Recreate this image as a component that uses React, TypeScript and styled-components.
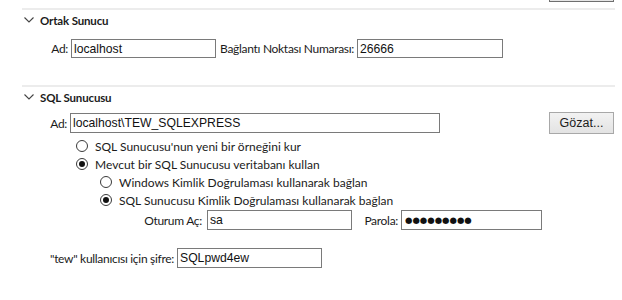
import React from "react";
import styled, { createGlobalStyle } from "styled-components";

const Global = createGlobalStyle`
  html, body { margin: 0; padding: 0; background: #ffffff; }
  body { font-family: Lato, "Open Sans", sans-serif; color: #1b1b1b; }
`;

const Page = styled.div`
  width: 622px;
  height: 300px;
  overflow: hidden;
  display: flex;
  flex-direction: column;
`;

const TopBar = styled.div`
  height: 2px;
  display: flex;
  justify-content: flex-end;
  padding-right: 8px;
`;

const ButtonStub = styled.div`
  width: 63px;
  height: 1px;
  border: 1px solid #6f6f6f;
  border-top: none;
  background: #e5e5e5;
`;

const Divider = styled.div<{ $top: number }>`
  margin-top: ${(p) => p.$top}px;
  margin-left: 22px;
  width: 593px;
  height: 2px;
  background: #ececec;
`;

const Header = styled.div`
  height: 20px;
  display: flex;
  align-items: center;
  padding-left: 24px;
  gap: 6px;
  font-size: 11.5px;
  letter-spacing: -0.15px;
  font-weight: 700;
  color: #1b1b1b;
`;

const Row = styled.div<{ $top: number; $indent: number; $h?: number }>`
  margin-top: ${(p) => p.$top}px;
  padding-left: ${(p) => p.$indent}px;
  height: ${(p) => p.$h ?? 20}px;
  display: flex;
  align-items: center;
`;

const Label = styled.span<{ $gap?: number; $w?: number }>`
  font-size: 12px;
  margin-right: ${(p) => p.$gap ?? 3}px;
  white-space: nowrap;
  ${(p) =>
    p.$w
      ? `width: ${p.$w}px; flex: none; display: flex; justify-content: flex-end; letter-spacing: -0.3px;`
      : ""}
`;

const Field = styled.input<{ $w: number; $h?: number }>`
  box-sizing: border-box;
  width: ${(p) => p.$w}px;
  height: ${(p) => p.$h ?? 20}px;
  border: 1px solid #7a7a7a;
  background: #ffffff;
  padding: 0 2px;
  margin: 0;
  font-family: "Liberation Sans", Arial, sans-serif;
  font-size: 12.2px;
  color: #111111;
  outline: none;
`;

const Dots = styled(Field)`
  font-family: "DejaVu Sans", sans-serif;
  font-size: 8.5px;
  letter-spacing: 0px;
  padding-left: 3px;
`;

const Spacer = styled.div<{ $w: number }>`
  width: ${(p) => p.$w}px;
  flex: none;
`;

const Button = styled.button`
  box-sizing: border-box;
  width: 65px;
  height: 22px;
  margin-left: auto;
  margin-right: 8px;
  border: 1px solid #a8a8a8;
  border-radius: 0;
  background: linear-gradient(#f2f2f2, #e3e3e3);
  font-family: "Liberation Sans", Arial, sans-serif;
  font-size: 12.5px;
  color: #1b1b1b;
  padding: 0;
`;

const RadioCircle = styled.span<{ $checked?: boolean }>`
  box-sizing: border-box;
  width: 12px;
  height: 12px;
  border-radius: 50%;
  border: 1px solid #3a3a3a;
  background: #ffffff;
  display: inline-flex;
  align-items: center;
  justify-content: center;
  margin-right: 7px;
  flex: none;
  &::after {
    content: "";
    width: 6px;
    height: 6px;
    border-radius: 50%;
    background: ${(p) => (p.$checked ? "#111111" : "transparent")};
  }
`;

const Chevron = () => (
  <svg width="10" height="6" viewBox="0 0 10 6">
    <polyline points="0.5,0.5 5,5 9.5,0.5" fill="none" stroke="#444" strokeWidth="1.1" />
  </svg>
);

const Radio = ({ indent, top, checked, children }: { indent: number; top: number; checked?: boolean; children: React.ReactNode }) => (
  <Row $top={top} $indent={indent} $h={18}>
    <RadioCircle $checked={checked} />
    <Label>{children}</Label>
  </Row>
);

export default function App() {
  return (
    <Page>
      <Global />
      <TopBar>
        <ButtonStub />
      </TopBar>
      <Divider $top={6} />
      <Header>
        <Chevron />
        Ortak Sunucu
      </Header>
      <Row $top={9} $indent={52} $h={19}>
        <Label $w={16}>Ad:</Label>
        <Field $w={145} $h={19} readOnly value="localhost" />
        <Spacer $w={3} />
        <Label $w={135}>Bağlantı Noktası Numarası:</Label>
        <Field $w={146} $h={19} readOnly value="26666" />
      </Row>
      <Divider $top={27} />
      <Header>
        <Chevron />
        SQL Sunucusu
      </Header>
      <Row $top={5} $indent={48} $h={22}>
        <Label $w={19}>Ad:</Label>
        <Field $w={370} readOnly value="localhost\TEW_SQLEXPRESS" />
        <Button>Gözat...</Button>
      </Row>
      <Radio top={3} indent={76}>SQL Sunucusu'nun yeni bir örneğini kur</Radio>
      <Radio top={0} indent={76} checked>Mevcut bir SQL Sunucusu veritabanı kullan</Radio>
      <Radio top={0} indent={100}>Windows Kimlik Doğrulaması kullanarak bağlan</Radio>
      <Radio top={0} indent={100} checked>SQL Sunucusu Kimlik Doğrulaması kullanarak bağlan</Radio>
      <Row $top={1} $indent={144}>
        <Label $w={58} $gap={5}>Oturum Aç:</Label>
        <Field $w={145} readOnly value="sa" />
        <Spacer $w={9} />
        <Label $w={37}>Parola:</Label>
        <Dots $w={141} readOnly aria-label="Parola" value="●●●●●●●●●" />
      </Row>
      <Row $top={18} $indent={50}>
        <Label $w={124}>"tew" kullanıcısı için şifre:</Label>
        <Field $w={145} readOnly value="SQLpwd4ew" />
      </Row>
    </Page>
  );
}
